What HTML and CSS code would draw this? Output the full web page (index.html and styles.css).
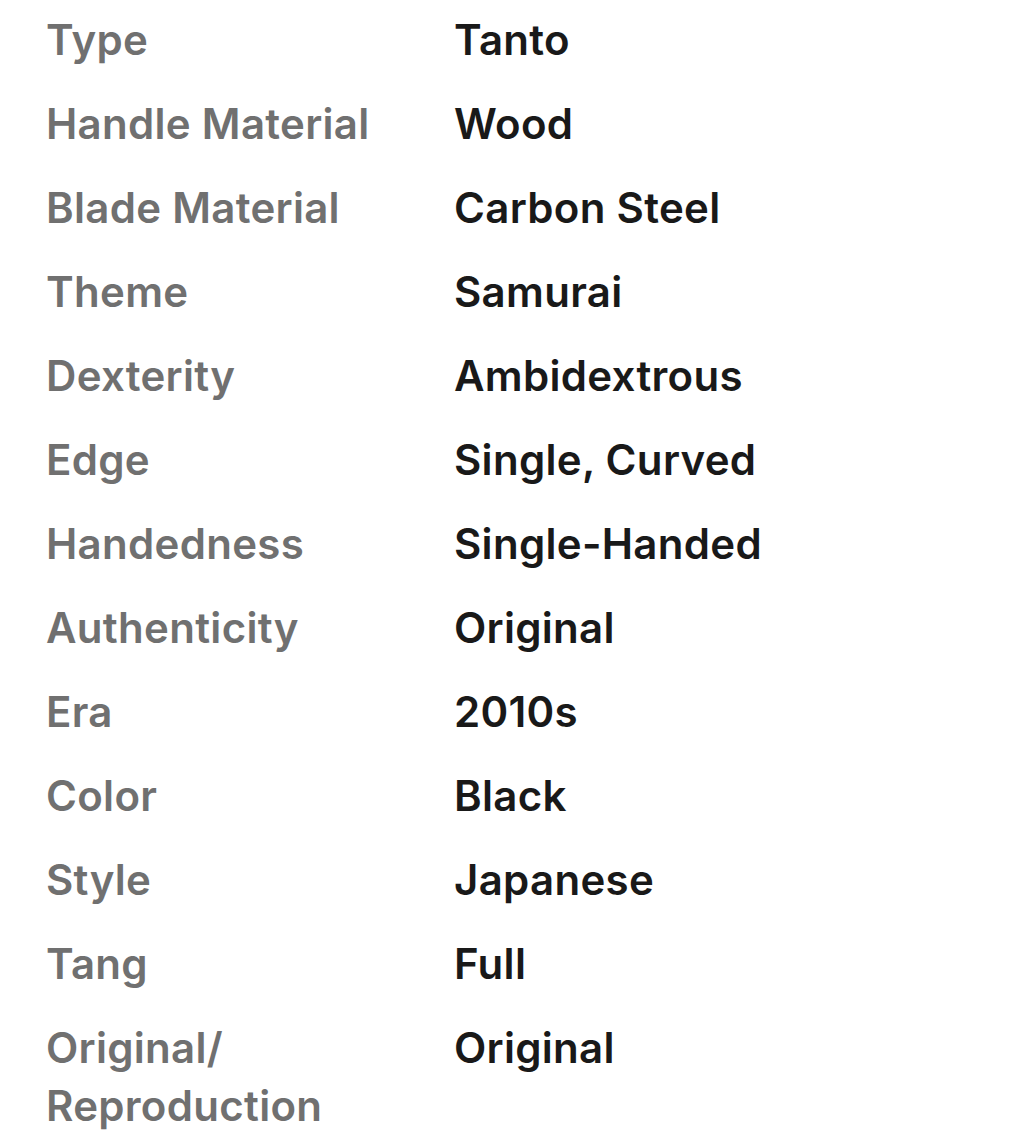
FILE: index.html
```html
<!DOCTYPE html>
<html>
<head>
<meta charset="utf-8">
<link rel="stylesheet" href="styles.css">
</head>
<body>
<dl class="specs">
  <div class="row"><dt>Type</dt><dd>Tanto</dd></div>
  <div class="row"><dt>Handle Material</dt><dd>Wood</dd></div>
  <div class="row"><dt>Blade Material</dt><dd>Carbon Steel</dd></div>
  <div class="row"><dt>Theme</dt><dd>Samurai</dd></div>
  <div class="row"><dt>Dexterity</dt><dd>Ambidextrous</dd></div>
  <div class="row"><dt>Edge</dt><dd>Single, Curved</dd></div>
  <div class="row"><dt>Handedness</dt><dd>Single-Handed</dd></div>
  <div class="row"><dt>Authenticity</dt><dd>Original</dd></div>
  <div class="row"><dt>Era</dt><dd>2010s</dd></div>
  <div class="row"><dt>Color</dt><dd>Black</dd></div>
  <div class="row"><dt>Style</dt><dd>Japanese</dd></div>
  <div class="row"><dt>Tang</dt><dd>Full</dd></div>
  <div class="row"><dt>Original/<wbr>Reproduction</dt><dd>Original</dd></div>
</dl>
</body>
</html>
```

FILE: styles.css
```css
html, body {
  margin: 0;
  padding: 0;
  background: #ffffff;
}
body {
  font-family: Inter, "Noto Sans", "Liberation Sans", sans-serif;
  font-weight: 600;
  font-size: 42px;
  line-height: 58px;
  letter-spacing: 0.3px;
}
.specs {
  margin: 0;
  padding: 11px 0 0 46px;
  display: flex;
  flex-direction: column;
  gap: 26px;
}
.row {
  display: grid;
  grid-template-columns: 408px 1fr;
}
dt {
  color: #707070;
  margin: 0;
  padding-right: 40px;
}
dd {
  color: #191919;
  margin: 0;
}
```
